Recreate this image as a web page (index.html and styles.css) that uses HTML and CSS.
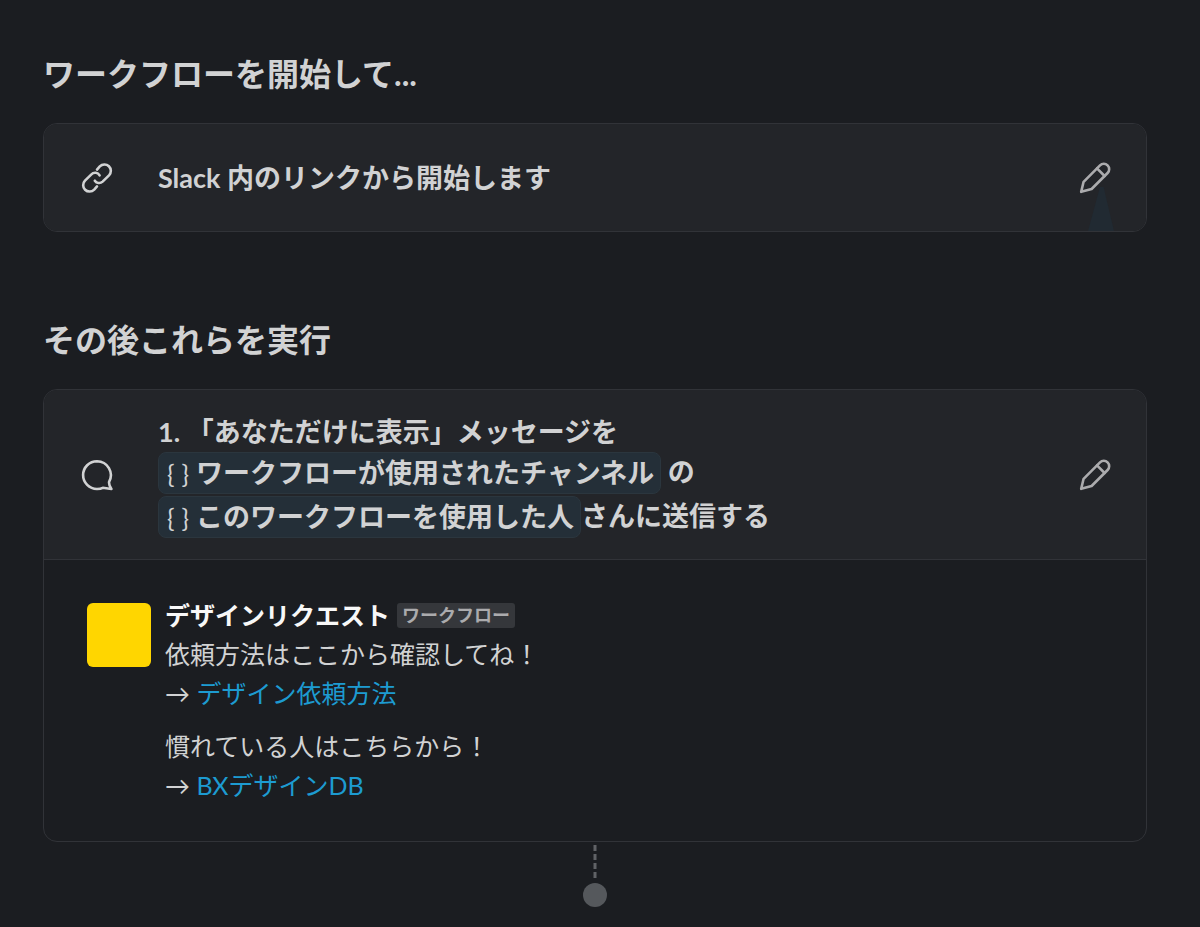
FILE: index.html
```
<!DOCTYPE html>
<html lang="ja">
<head>
  <meta charset="UTF-8" />
  <meta name="viewport" content="width=device-width, initial-scale=1" />
  <title>ワークフロービルダー</title>
  <link rel="stylesheet" href="styles.css">
</head>
<body>
  <main class="builder">

    <!-- 開始条件 -->
    <section class="section">
      <h2>ワークフローを開始して...</h2>
      <div class="card">
        <div class="card-row trigger">
          <svg class="icon" viewBox="0 0 32 32" aria-hidden="true">
            <path d="M16 7.6 18.8 4.4a6.4 6.4 0 0 1 9.2 9L21.6 19.6a5.2 5.2 0 0 1-7.8-.9" />
            <path d="M16 24.4 13.2 27.6a6.4 6.4 0 0 1-9.2-9L10.4 12.4a5.2 5.2 0 0 1 8.2.9" />
          </svg>
          <p class="title">Slack 内のリンクから開始します</p>
          <button class="edit" type="button" aria-label="編集">
            <svg class="icon" viewBox="0 0 32 32" aria-hidden="true">
              <path d="M2.2 29.8 4.6 19.8 21 3.4a5.2 5.2 0 0 1 7.6 7.6L12.6 27Z" />
              <path d="M18 6.4 25.6 14" />
            </svg>
          </button>
        </div>
      </div>
    </section>

    <!-- ステップ -->
    <section class="section">
      <h2>その後これらを実行</h2>
      <div class="card">
        <div class="card-row step">
          <svg class="icon" viewBox="0 0 32 32" aria-hidden="true">
            <path d="M16 2.2a13.9 13.9 0 1 0 0 27.8c2 0 4.2-.3 5.8-1.2l8.6 1.2c-1.4-2-2.6-4.6-2.3-7.2A13.9 13.9 0 0 0 16 2.2Z" />
          </svg>
          <div class="title">
            <p>1. 「あなただけに表示」メッセージを</p>
            <p><span class="pill"><span class="braces"><span>{</span><span>}</span></span>ワークフローが使用されたチャンネル</span> の</p>
            <p><span class="pill"><span class="braces"><span>{</span><span>}</span></span>このワークフローを使用した人</span>さんに送信する</p>
          </div>
          <button class="edit" type="button" aria-label="編集">
            <svg class="icon" viewBox="0 0 32 32" aria-hidden="true">
              <path d="M2.2 29.8 4.6 19.8 21 3.4a5.2 5.2 0 0 1 7.6 7.6L12.6 27Z" />
              <path d="M18 6.4 25.6 14" />
            </svg>
          </button>
        </div>

        <div class="message">
          <div class="avatar"></div>
          <div class="message-body">
            <div class="sender">
              <strong>デザインリクエスト</strong>
              <span class="badge">ワークフロー</span>
            </div>
            <p>依頼方法はここから確認してね！<br>→ <a href="#">デザイン依頼方法</a></p>
            <p>慣れている人はこちらから！<br>→ <a href="#">BXデザインDB</a></p>
          </div>
        </div>
      </div>
      <div class="connector">
        <svg viewBox="0 0 26 66" aria-hidden="true">
          <path d="M13 3V37" />
          <circle cx="13" cy="53" r="12" />
        </svg>
      </div>
    </section>

  </main>
</body>
</html>
```
FILE: styles.css
```
:root {
  --bg: #1b1d21;
  --card: #232529;
  --border: #313338;
  --text: #d1d2d3;
  --link: #1d9bd1;
  --pill: #242f38;
}

* {
  box-sizing: border-box;
}

body {
  margin: 0;
  background: var(--bg);
  color: var(--text);
  font-family: Lato, "Noto Sans CJK JP", sans-serif;
}

p,
h2 {
  margin: 0;
}

.builder {
  padding: 54px 53px 0 43px;
}

.section + .section {
  margin-top: 88px;
}

h2 {
  margin-bottom: 29px;
  font-size: 32px;
  line-height: 40px;
  font-weight: 700;
}

.card {
  border: 1px solid var(--border);
  border-radius: 14px;
  overflow: hidden;
}

.card-row {
  display: flex;
  align-items: center;
  padding: 20px 35px 20px 37px;
  background: var(--card);
}

.trigger {
  position: relative;
  min-height: 107px;
}

/* カーソルの影 */
.trigger::after {
  content: "";
  position: absolute;
  right: 32px;
  bottom: 0;
  width: 26px;
  height: 44px;
  background: #212a32;
  clip-path: polygon(46% 0, 60% 0, 100% 100%, 0 100%);
}

.step {
  min-height: 170px;
  border-bottom: 1px solid var(--border);
}

.icon {
  display: block;
  flex: none;
  width: 32px;
  height: 32px;
  fill: none;
  stroke: currentColor;
  stroke-width: 2.6;
  stroke-linecap: round;
  stroke-linejoin: round;
}

.title {
  flex: 1;
  margin-left: 45px;
  font-size: 27px;
  line-height: 40px;
  font-weight: 700;
}

.title p + p + p {
  margin-top: 2px;
}

.pill {
  display: inline-block;
  padding: 0 6px 0 8px;
  border: 1px solid #2b363e;
  border-radius: 8px;
  background: var(--pill);
  vertical-align: top;
}

.braces {
  display: inline-flex;
  gap: 7px;
  margin-right: 7px;
  font-size: 25px;
  line-height: 1;
  font-weight: 400;
}

.edit {
  position: relative;
  z-index: 1;
  padding: 0;
  border: none;
  background: none;
  color: #ababad;
  cursor: pointer;
}

.message {
  display: flex;
  gap: 14px;
  padding: 36px 43px;
}

.avatar {
  flex: none;
  width: 64px;
  height: 64px;
  margin-top: 7px;
  border-radius: 6px;
  background: #ffd600;
}

.message-body {
  font-size: 25px;
  line-height: 39px;
}

.message-body p + p {
  margin-top: 14px;
}

.sender {
  display: flex;
  align-items: center;
  gap: 7px;
}

.sender strong {
  color: #f8f8f8;
}

.badge {
  padding: 0 5px;
  border-radius: 3px;
  background: #35373b;
  color: #ababad;
  font-size: 18px;
  line-height: 25px;
  font-weight: 700;
}

a {
  color: var(--link);
  text-decoration: none;
}

.connector {
  display: flex;
  justify-content: center;
}

.connector svg {
  width: 26px;
  height: 66px;
}

.connector path {
  stroke: #606266;
  stroke-width: 3;
  stroke-dasharray: 6 3;
}

.connector circle {
  fill: #55585c;
}
```
